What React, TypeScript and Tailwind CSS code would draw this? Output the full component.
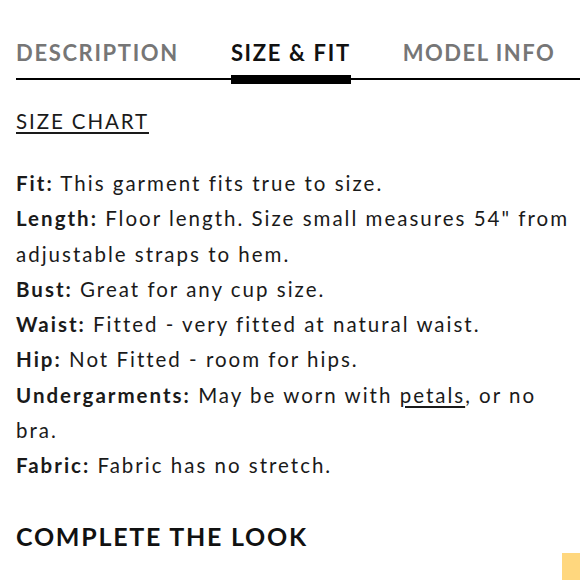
import React from "react";

const font = { fontFamily: "Lato, 'Open Sans', sans-serif" };

function Row({ label, children }: { label: string; children: React.ReactNode }) {
  return (
    <p>
      <span className="font-bold">{label}</span> {children}
    </p>
  );
}

export default function App() {
  return (
    <div className="relative w-[580px] h-[580px] overflow-hidden bg-white text-[#1a1a1a]" style={font}>
      <div className="ml-4 pt-[40px] flex items-end gap-[52px] border-b-2 border-black">
        <div className="pb-[12px] text-[22px] leading-[26px] font-bold tracking-[1.65px] text-[#767676]">DESCRIPTION</div>
        <div className="flex flex-col items-stretch -mb-[6px]">
          <div className="pb-[9px] text-[22px] leading-[26px] font-bold tracking-[1.65px] text-[#111]">SIZE &amp; FIT</div>
          <div className="h-[9px] bg-black" />
        </div>
        <div className="pb-[12px] text-[22px] leading-[26px] font-bold tracking-[1.5px] text-[#767676]">MODEL INFO</div>
      </div>

      <div className="px-4 pt-[28px]">
        <a className="text-[20.5px] leading-[26px] underline underline-offset-[3px] decoration-[1.5px] tracking-[1.9px]">SIZE CHART</a>
      </div>

      <div className="pl-4 pr-[4px] pt-[31px] text-[20.5px] leading-[35.3px] tracking-[2px]">
        <Row label="Fit:">This garment fits true to size.</Row>
        <Row label="Length:">Floor length. Size small measures 54" from adjustable straps to hem.</Row>
        <Row label="Bust:">Great for any cup size.</Row>
        <Row label="Waist:">Fitted - very fitted at natural waist.</Row>
        <Row label="Hip:">Not Fitted - room for hips.</Row>
        <Row label="Undergarments:">
          May be worn with <span className="underline underline-offset-[3px]">petals</span>, or no bra.
        </Row>
        <Row label="Fabric:">Fabric has no stretch.</Row>
      </div>

      <div className="px-4 pt-[37px]">
        <h2 className="text-[25px] leading-[30px] font-bold tracking-[1.75px] text-[#111]">COMPLETE THE LOOK</h2>
      </div>
      <div className="absolute left-[562px] top-[553px] w-[30px] h-[40px] bg-[#ffd77e]" />
    </div>
  );
}
